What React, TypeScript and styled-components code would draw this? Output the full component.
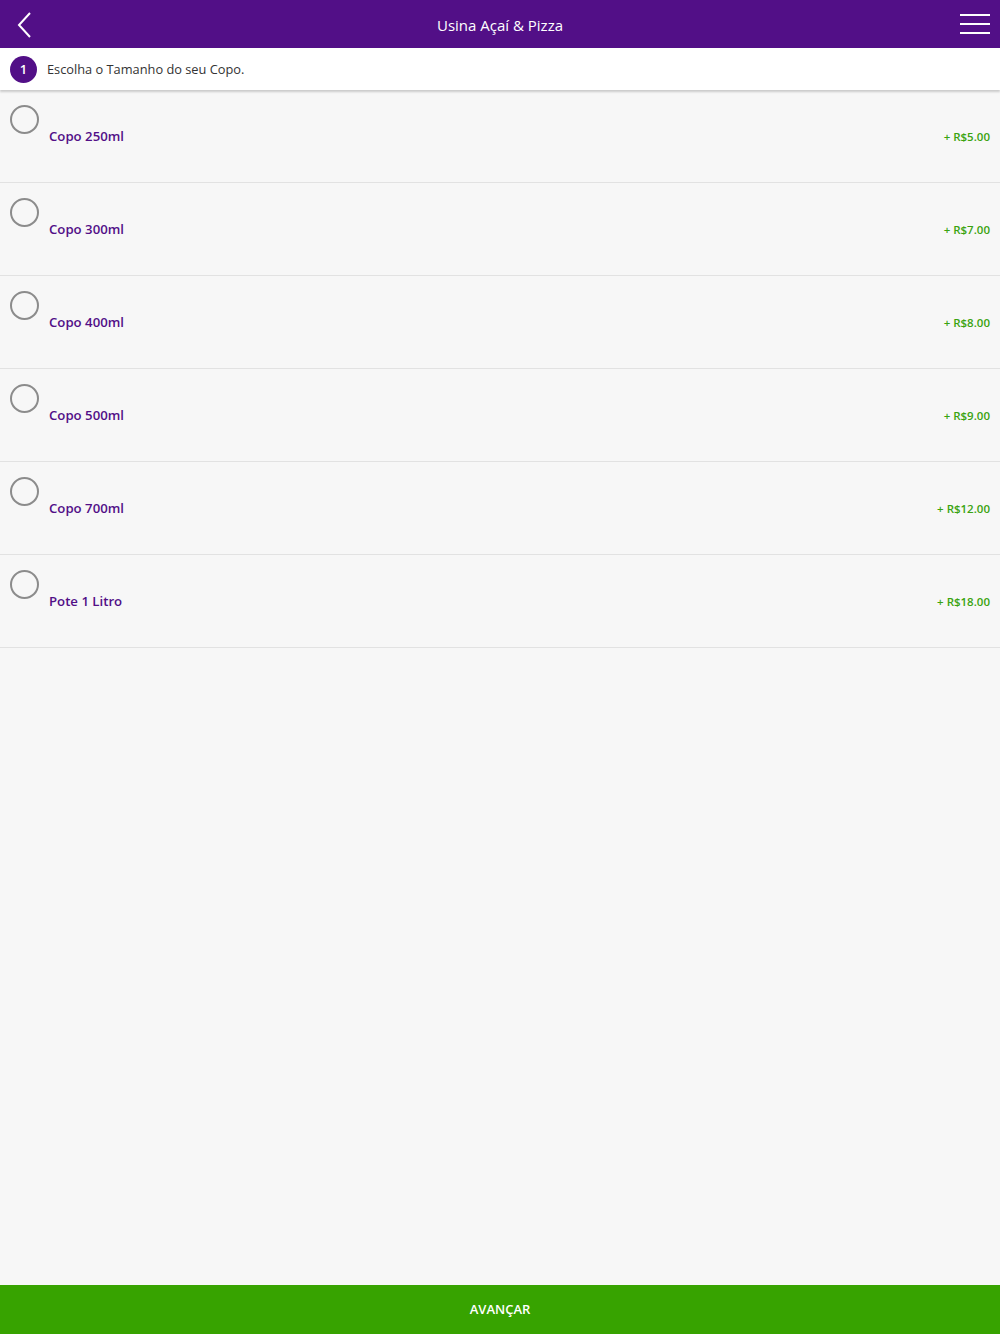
import styled, { createGlobalStyle } from "styled-components";

const GlobalStyle = createGlobalStyle`
  html, body {
    margin: 0;
    padding: 0;
    background: #f7f7f7;
  }
  * {
    box-sizing: border-box;
  }
`;

const Page = styled.div`
  width: 1000px;
  height: 1334px;
  display: flex;
  flex-direction: column;
  background: #f7f7f7;
  font-family: "Open Sans", "Noto Sans", sans-serif;
`;

const Header = styled.div`
  height: 48px;
  background: #520f87;
  display: flex;
  align-items: center;
  justify-content: space-between;
  padding: 2px 10px 0 10px;
`;

const HeaderTitle = styled.span`
  color: #ffffff;
  font-size: 15px;
`;

const IconButton = styled.div`
  width: 30px;
  height: 30px;
  display: flex;
  align-items: center;
  justify-content: center;
`;

const StepBar = styled.div`
  height: 42px;
  background: #ffffff;
  display: flex;
  align-items: center;
  padding-left: 10px;
  gap: 10px;
  box-shadow: 0 2px 2px rgba(0, 0, 0, 0.18);
  position: relative;
  z-index: 1;
`;

const StepBadge = styled.div`
  width: 27px;
  height: 27px;
  border-radius: 50%;
  background: #520f87;
  color: #ffffff;
  font-size: 13px;
  font-weight: 600;
  display: flex;
  align-items: center;
  justify-content: center;
`;

const StepText = styled.span`
  color: #333333;
  font-size: 12.8px;
`;

const List = styled.div`
  flex: 1;
  display: flex;
  flex-direction: column;
`;

const Row = styled.div`
  height: 93px;
  border-bottom: 1px solid #e2e2e2;
  display: grid;
  grid-template-columns: 39px 1fr auto;
  padding: 15px 10px 0 10px;
`;

const Radio = styled.div`
  width: 29px;
  height: 29px;
  border-radius: 50%;
  border: 2px solid #8c8c8c;
`;

const Label = styled.span`
  color: #520f87;
  font-size: 13.2px;
  font-weight: 600;
  padding-top: 22px;
`;

const Price = styled.span`
  color: #3aa310;
  font-size: 11.5px;
  font-weight: 600;
  padding-top: 24px;
`;

const Footer = styled.button`
  height: 49px;
  border: none;
  background: #37a300;
  color: #ffffff;
  font-family: "Open Sans", "Noto Sans", sans-serif;
  font-size: 13px;
  font-weight: 600;
  width: 100%;
  padding: 0 0 2px;
`;

const options = [
  { name: "Copo 250ml", price: "+ R$5.00" },
  { name: "Copo 300ml", price: "+ R$7.00" },
  { name: "Copo 400ml", price: "+ R$8.00" },
  { name: "Copo 500ml", price: "+ R$9.00" },
  { name: "Copo 700ml", price: "+ R$12.00" },
  { name: "Pote 1 Litro", price: "+ R$18.00" },
];

export default function App() {
  return (
    <Page>
      <GlobalStyle />
      <Header>
        <IconButton>
          <svg width="16" height="26" viewBox="0 0 16 26">
            <path d="M13 1 L2 13 L13 25" fill="none" stroke="#fff" strokeWidth="2" />
          </svg>
        </IconButton>
        <HeaderTitle>Usina Açaí &amp; Pizza</HeaderTitle>
        <IconButton>
          <svg width="30" height="22" viewBox="0 0 30 22">
            <rect x="0" y="0" width="30" height="2" fill="#fff" />
            <rect x="0" y="9" width="30" height="2" fill="#fff" />
            <rect x="0" y="18" width="30" height="2" fill="#fff" />
          </svg>
        </IconButton>
      </Header>
      <StepBar>
        <StepBadge>1</StepBadge>
        <StepText>Escolha o Tamanho do seu Copo.</StepText>
      </StepBar>
      <List>
        {options.map((o) => (
          <Row key={o.name}>
            <Radio />
            <Label>{o.name}</Label>
            <Price>{o.price}</Price>
          </Row>
        ))}
      </List>
      <Footer>AVANÇAR</Footer>
    </Page>
  );
}
